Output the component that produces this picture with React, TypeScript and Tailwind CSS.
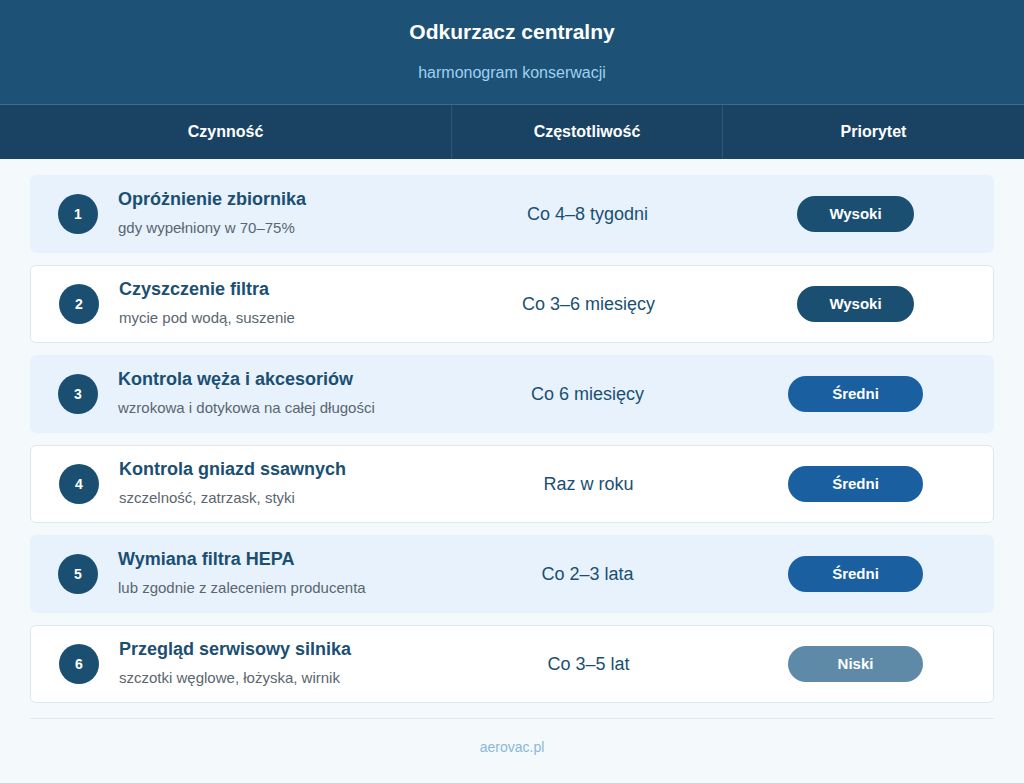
const rows = [
  { t: "Opróżnienie zbiornika", s: "gdy wypełniony w 70–75%", f: "Co 4–8 tygodni", p: "Wysoki" },
  { t: "Czyszczenie filtra", s: "mycie pod wodą, suszenie", f: "Co 3–6 miesięcy", p: "Wysoki" },
  { t: "Kontrola węża i akcesoriów", s: "wzrokowa i dotykowa na całej długości", f: "Co 6 miesięcy", p: "Średni" },
  { t: "Kontrola gniazd ssawnych", s: "szczelność, zatrzask, styki", f: "Raz w roku", p: "Średni" },
  { t: "Wymiana filtra HEPA", s: "lub zgodnie z zaleceniem producenta", f: "Co 2–3 lata", p: "Średni" },
  { t: "Przegląd serwisowy silnika", s: "szczotki węglowe, łożyska, wirnik", f: "Co 3–5 lat", p: "Niski" },
];
const badge: Record<string, string> = {
  Wysoki: "bg-[#1b4f72] w-[117px]",
  "Średni": "bg-[#1a5fa0] w-[135px]",
  Niski: "bg-[#5e8aa8] w-[135px]",
};
export default function App() {
  return (
    <div className="w-[1024px] h-[783px] bg-[#f4f9fc] flex flex-col" style={{ fontFamily: '"Liberation Sans", Arial, sans-serif' }}>
      <div className="h-[105px] bg-[#1d5176] flex flex-col items-center justify-center border-b border-[#3c6b8c]">
        <div className="text-white font-bold text-[21px] mt-[-3px]">Odkurzacz centralny</div>
        <div className="text-[#9fd0f2] text-[16px] mt-[14px]">harmonogram konserwacji</div>
      </div>
      <div className="h-[54px] bg-[#1a4263] flex text-white font-bold text-[16px]">
        <div className="w-[452px] flex items-center justify-center border-r border-[#2c5878]">Czynność</div>
        <div className="w-[271px] flex items-center justify-center border-r border-[#2c5878]">Częstotliwość</div>
        <div className="flex-1 flex items-center justify-center">Priorytet</div>
      </div>
      <div className="px-[30px] pt-[16px] flex flex-col gap-[12px]">
        {rows.map((r, i) => (
          <div key={i} className={`h-[78px] rounded-[6px] flex items-center ${i % 2 === 0 ? "bg-[#e7f2fc]" : "bg-white border border-[#dde8ef]"}`}>
            <div className="w-[422px] flex items-center pl-[28px]">
              <div className="w-[40px] h-[40px] rounded-full bg-[#1b4f72] text-white font-bold text-[14px] flex items-center justify-center">{i + 1}</div>
              <div className="ml-[20px] flex flex-col">
                <div className="text-[#1b4f72] font-bold text-[18px] leading-[22px]">{r.t}</div>
                <div className="text-[#5a6670] text-[15px] mt-[7px]">{r.s}</div>
              </div>
            </div>
            <div className="w-[271px] text-center text-[#1b4f72] text-[18px]">{r.f}</div>
            <div className="flex-1 flex justify-center pr-[6px]">
              <div className={`h-[36px] rounded-full text-white font-bold text-[15px] flex items-center justify-center ${badge[r.p]}`}>{r.p}</div>
            </div>
          </div>
        ))}
      </div>
      <div className="mx-[30px] mt-[15px] border-t border-[#dde8ef]"></div>
      <div className="text-center text-[#8bb8d8] text-[14px] mt-[18px]">aerovac.pl</div>
    </div>
  );
}
